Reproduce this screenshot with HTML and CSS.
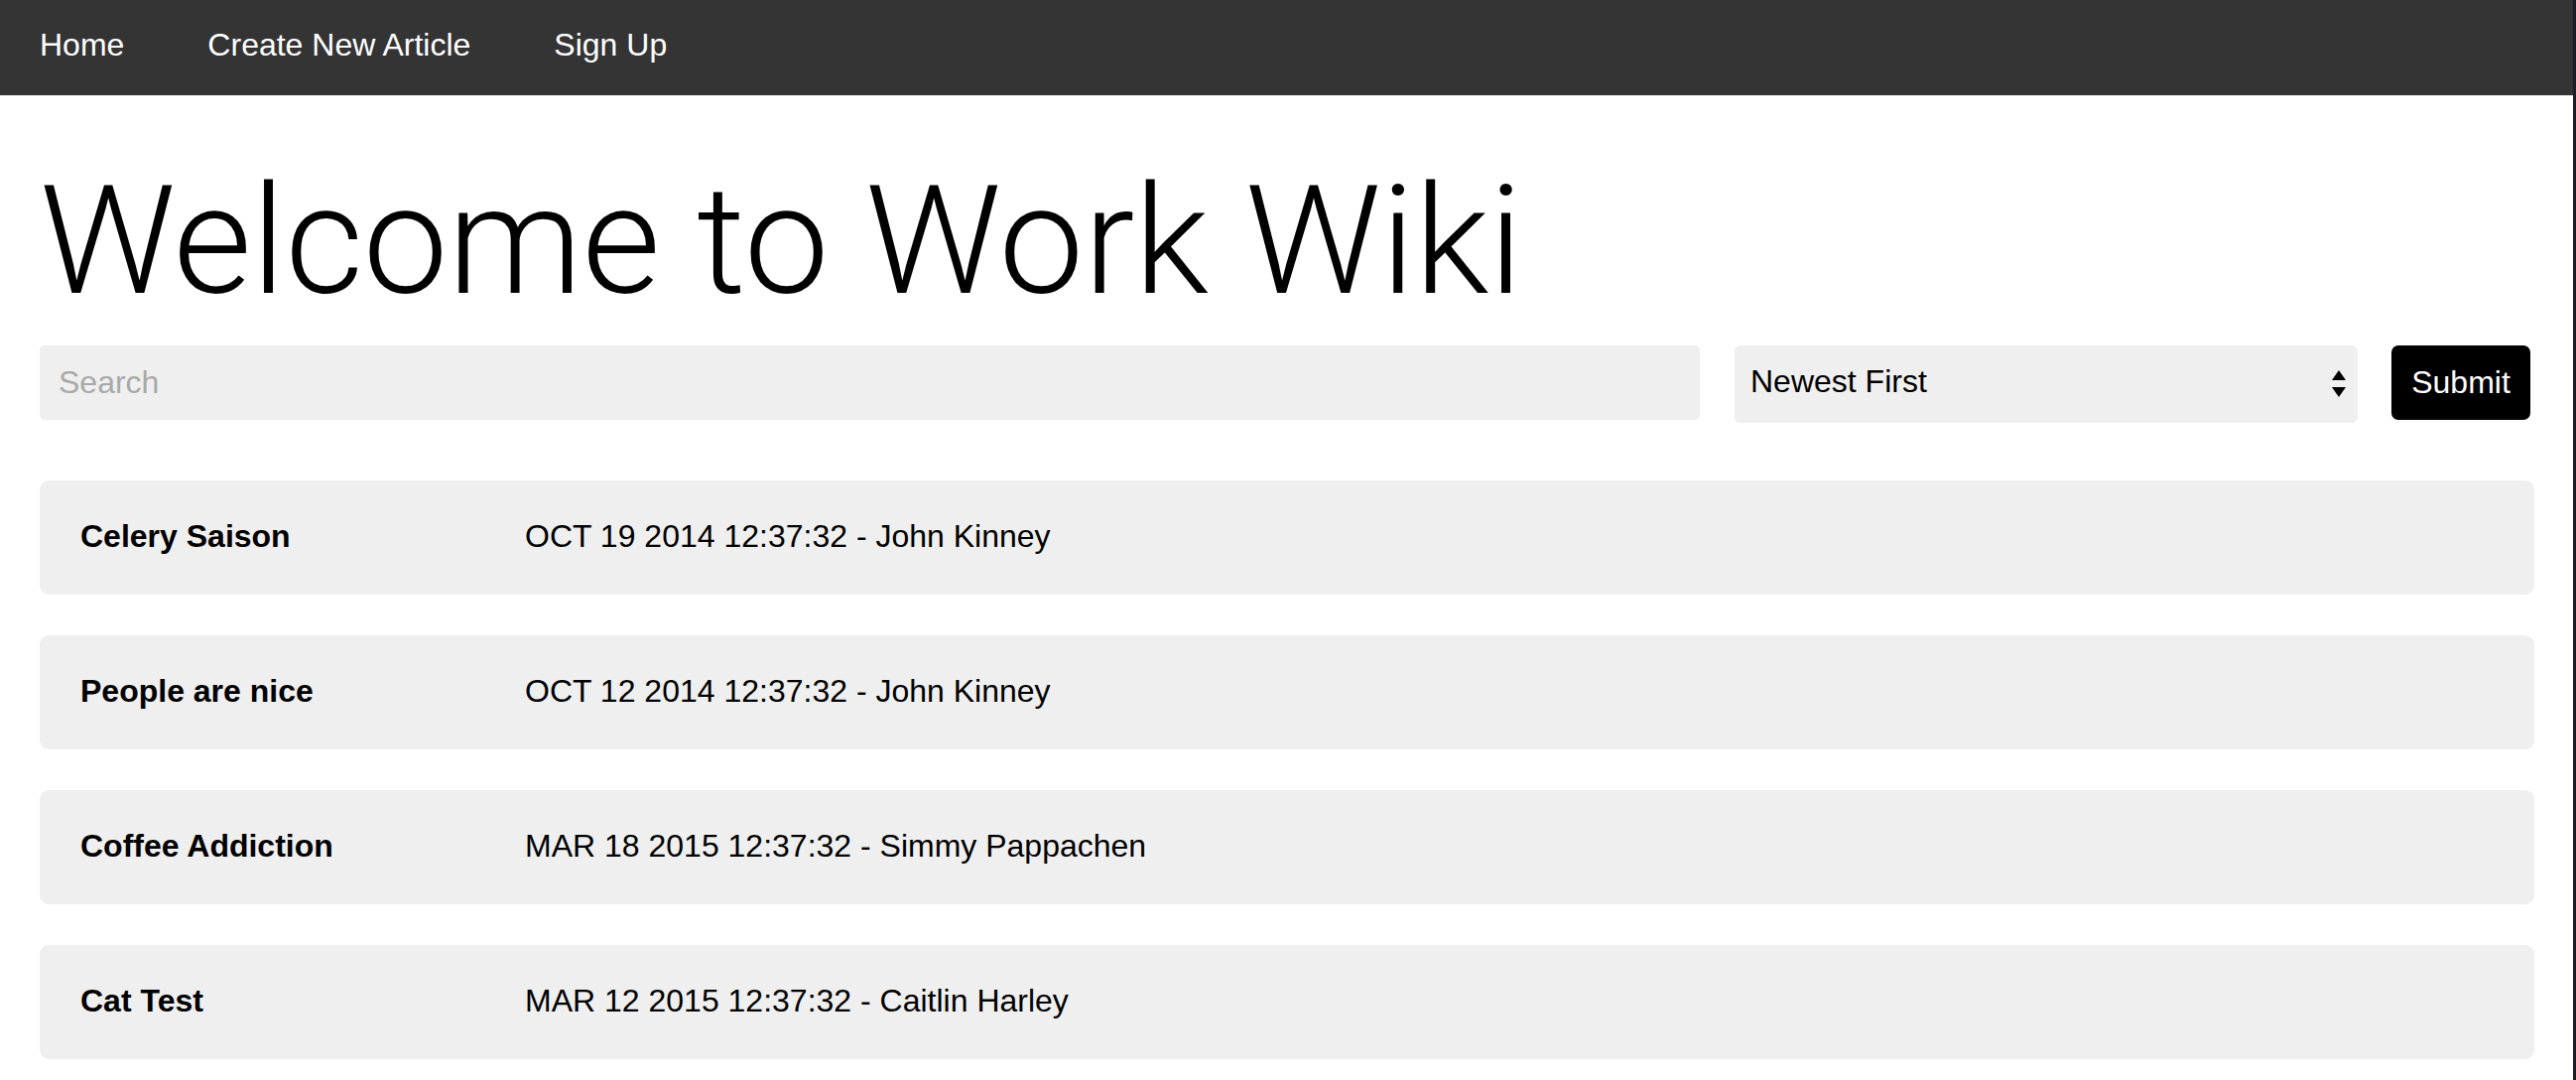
FILE: index.html
```html
<!DOCTYPE html>
<html lang="en">
<head>
<meta charset="utf-8">
<title>Work Wiki</title>
<link rel="stylesheet" href="styles.css">
</head>
<body>
<div class="page">
  <nav class="topnav">
    <a class="nav-link" href="#">Home</a>
    <a class="nav-link" href="#">Create New Article</a>
    <a class="nav-link" href="#">Sign Up</a>
  </nav>
  <main class="content">
    <h1 class="title">Welcome to Work Wiki</h1>
    <form class="search-form">
      <input class="search-input" type="text" placeholder="Search">
      <div class="select-wrap">
        <select class="sort-select">
          <option>Newest First</option>
          <option>Oldest First</option>
        </select>
        <svg class="select-arrows" width="14" height="28" viewBox="0 0 14 28">
          <path d="M7 0 L14 10 L0 10 Z" fill="#000"/>
          <path d="M0 17 L14 17 L7 27 Z" fill="#000"/>
        </svg>
      </div>
      <button class="submit-btn" type="button">Submit</button>
    </form>
    <ul class="articles">
      <li class="article"><span class="article-title">Celery Saison</span><span class="article-meta">OCT 19 2014 12:37:32 - John Kinney</span></li>
      <li class="article"><span class="article-title">People are nice</span><span class="article-meta">OCT 12 2014 12:37:32 - John Kinney</span></li>
      <li class="article"><span class="article-title">Coffee Addiction</span><span class="article-meta">MAR 18 2015 12:37:32 - Simmy Pappachen</span></li>
      <li class="article"><span class="article-title">Cat Test</span><span class="article-meta">MAR 12 2015 12:37:32 - Caitlin Harley</span></li>
    </ul>
  </main>
</div>
</body>
</html>
```

FILE: styles.css
```css
html {
  background: #1d1c26;
}
body {
  margin: 0;
  font-family: "Liberation Sans", Arial, sans-serif;
  color: #000;
  overflow: hidden;
}
.page {
  width: 2593px;
  min-height: 1088px;
  background: #fff;
}
.topnav {
  display: flex;
  height: 96px;
  background: #343434;
}
.nav-link {
  color: #fff;
  text-decoration: none;
  font-size: 32px;
  line-height: 90px;
  padding: 0 42px;
}
.nav-link:first-child {
  padding-left: 40px;
}
.content {
  padding: 0 39px 0 40px;
}
.title {
  margin: 70px 0 29px;
  font-family: Roboto, "Liberation Sans", sans-serif;
  font-weight: 300;
  font-size: 153px;
  line-height: 1;
  letter-spacing: -0.35px;
}
.search-form {
  display: flex;
  align-items: flex-start;
  margin: 0 4px 58px 0;
}
.search-input {
  flex: 1;
  height: 75px;
  box-sizing: border-box;
  border: none;
  border-radius: 5px;
  background: #efefef;
  padding: 0 19px;
  font-family: "Liberation Sans", Arial, sans-serif;
  font-size: 32px;
  color: #000;
  outline: none;
}
.search-input::placeholder {
  color: #a9a9a9;
}
.select-wrap {
  position: relative;
  margin-left: 35px;
  width: 628px;
}
.sort-select {
  display: block;
  width: 100%;
  height: 78px;
  box-sizing: border-box;
  border: none;
  border-radius: 6px;
  background: #efefef;
  appearance: none;
  -webkit-appearance: none;
  padding: 0 16px 6px;
  font-family: "Liberation Sans", Arial, sans-serif;
  font-size: 32px;
  color: #000;
}
.select-arrows {
  position: absolute;
  right: 12px;
  top: 25px;
  pointer-events: none;
}
.submit-btn {
  margin-left: 34px;
  width: 140px;
  height: 75px;
  border: none;
  border-radius: 7px;
  background: #000;
  color: #fff;
  font-family: "Liberation Sans", Arial, sans-serif;
  font-size: 32px;
  padding: 0;
}
.articles {
  list-style: none;
  margin: 0;
  padding: 0;
  display: flex;
  flex-direction: column;
  gap: 41px;
}
.article {
  display: flex;
  align-items: center;
  height: 115px;
  padding: 0 41px 2px;
  box-sizing: border-box;
  background: #efefef;
  border-radius: 9px;
  font-size: 32px;
}
.article-title {
  width: 448px;
  font-weight: bold;
}
```
